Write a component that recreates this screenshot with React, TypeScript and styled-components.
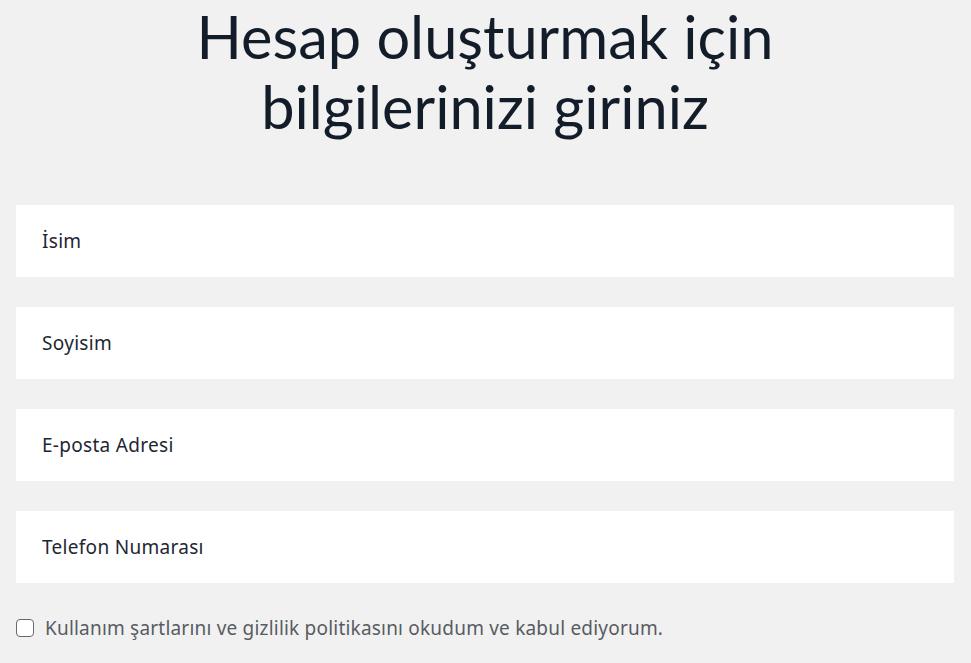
import styled, { createGlobalStyle } from "styled-components";

const GlobalStyle = createGlobalStyle`
  * {
    box-sizing: border-box;
  }
  body {
    margin: 0;
    background: #f1f1f1;
    font-family: "Noto Sans", "Lato", sans-serif;
  }
`;

const fields = ["İsim", "Soyisim", "E-posta Adresi", "Telefon Numarası"];

const App = () => {
  return (
    <>
      <GlobalStyle />
      <Page>
        <Title>
          Hesap oluşturmak için
          <br />
          bilgilerinizi giriniz
        </Title>
        <Form>
          {fields.map((f) => (
            <Field key={f} type="text" placeholder={f} />
          ))}
          <Terms>
            <Check type="checkbox" />
            <span>Kullanım şartlarını ve gizlilik politikasını okudum ve kabul ediyorum.</span>
          </Terms>
        </Form>
      </Page>
    </>
  );
};

const Page = styled.div`
  padding: 0 17px 0 16px;
`;

const Title = styled.h1`
  margin: 0;
  padding-top: 1px;
  text-align: center;
  font-family: "Lato", sans-serif;
  font-weight: 400;
  font-size: 59.5px;
  line-height: 70px;
  color: #131d29;
`;

const Form = styled.form`
  display: flex;
  flex-direction: column;
  gap: 30px;
  margin-top: 64px;
`;

const Field = styled.input`
  display: block;
  width: 100%;
  height: 72px;
  border: none;
  outline: none;
  background: #fff;
  padding: 0 26px;
  font-family: "Noto Sans", sans-serif;
  font-size: 19px;
  letter-spacing: 0.3px;
  color: #1d2733;
  &::placeholder {
    color: #1d2733;
    opacity: 1;
  }
`;

const Terms = styled.label`
  display: flex;
  align-items: center;
  gap: 11px;
  margin-top: 2px;
  font-size: 19px;
  letter-spacing: 0.2px;
  color: #585c62;
`;

const Check = styled.input`
  appearance: none;
  margin: 0;
  width: 18px;
  height: 18px;
  border: 1.5px solid #66696d;
  border-radius: 4px;
  background: #fff;
`;

export default App;
